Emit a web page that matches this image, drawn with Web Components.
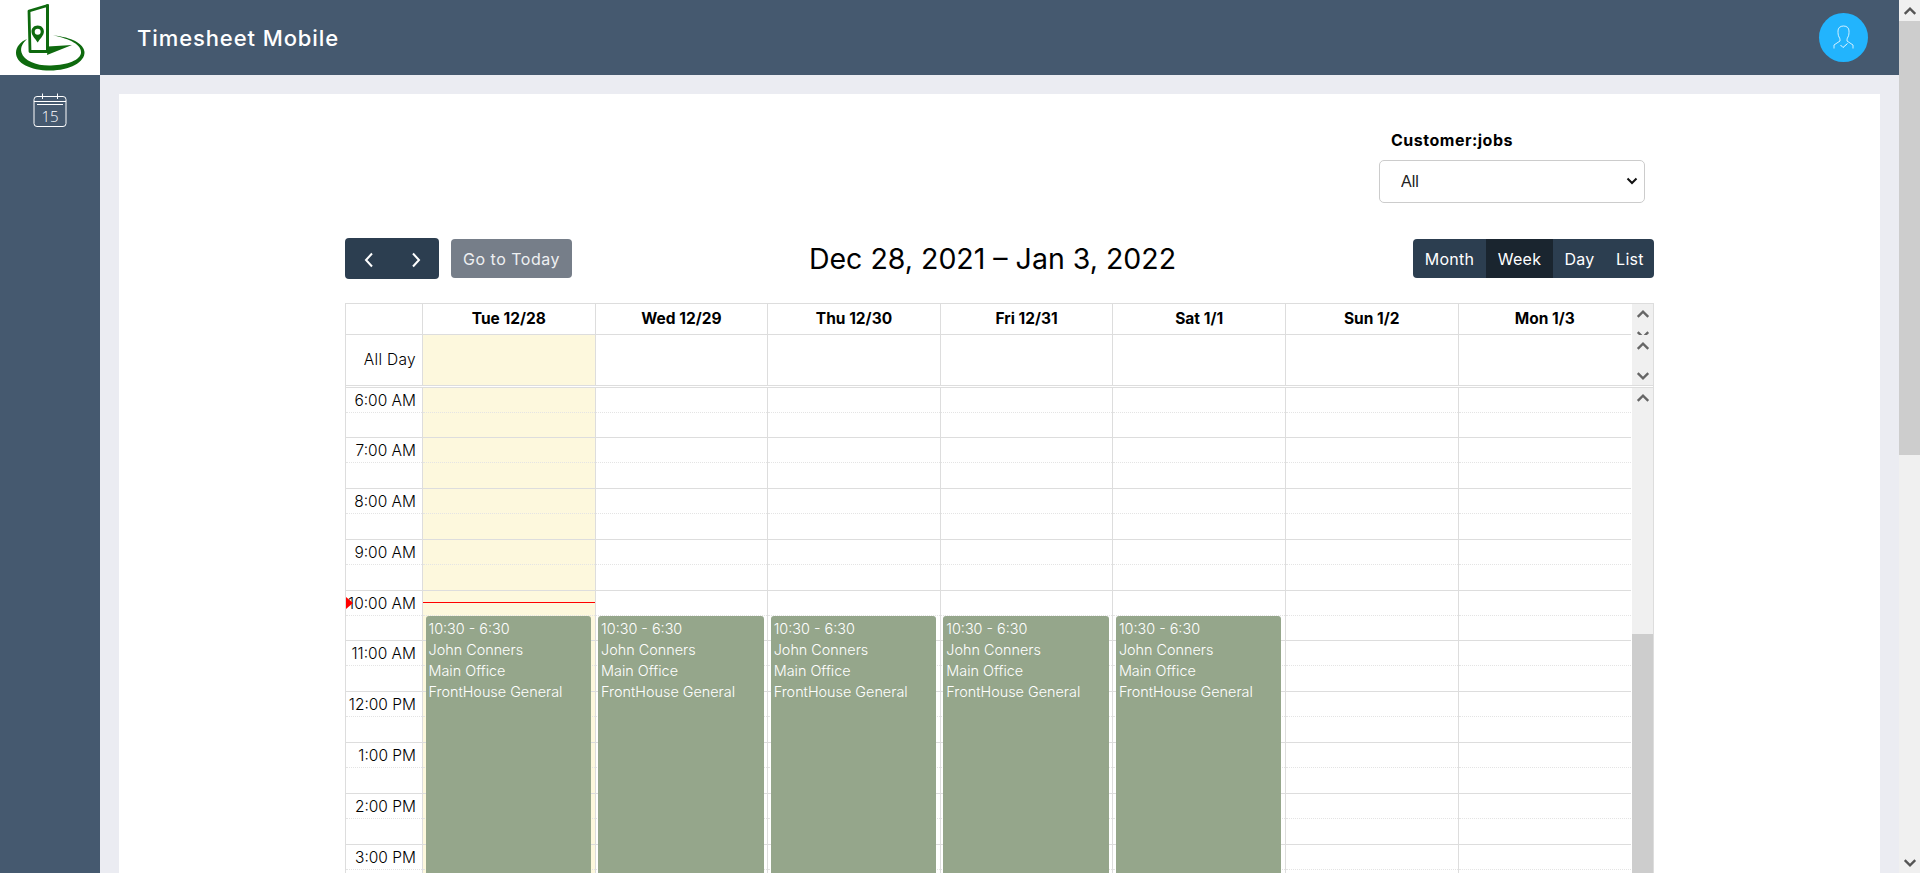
<!DOCTYPE html>
<html>
<head>
<meta charset="utf-8">
<title>Timesheet Mobile</title>
<style>
    html, body { margin: 0; height: 873px; overflow: hidden; background: #ebecf2; }
    body { font-family: Inter, "Open Sans", sans-serif; }
</style>
</head>
<body>
<ts-shell>
    <ts-sidebar slot="side"></ts-sidebar>
    <ts-header slot="top" title-text="Timesheet Mobile"></ts-header>
    <ts-card>
        <ts-filter label="Customer:jobs"></ts-filter>
        <ts-toolbar range="Dec 28, 2021 – Jan 3, 2022"></ts-toolbar>
        <ts-calendar></ts-calendar>
    </ts-card>
    <ts-page-scroll slot="scroll"></ts-page-scroll>
</ts-shell>

<script>
const chevUp = (color, w) => `<svg width="${w}" height="${w}" viewBox="0 0 12 12"><path d="M1.5 8.5 6 4l4.5 4.5" fill="none" stroke="${color}" stroke-width="2"/></svg>`;
const chevDown = (color, w) => `<svg width="${w}" height="${w}" viewBox="0 0 12 12"><path d="M1.5 3.5 6 8l4.5-4.5" fill="none" stroke="${color}" stroke-width="2"/></svg>`;

class TsShell extends HTMLElement {
    constructor() {
        super();
        this.attachShadow({ mode: 'open' });
    }
    connectedCallback() {
        this.shadowRoot.innerHTML = `
            <style>
                :host { display: flex; width: 1920px; height: 873px; overflow: hidden; }
                .main { flex: 1; min-width: 0; display: flex; flex-direction: column; overflow: hidden; }
                .content { flex: 1; min-height: 0; padding: 19px 19px 0; overflow: hidden; background: #ebecf2; }
            </style>
            <slot name="side"></slot>
            <div class="main">
                <slot name="top"></slot>
                <div class="content"><slot></slot></div>
            </div>
            <slot name="scroll"></slot>
        `;
    }
}

class TsSidebar extends HTMLElement {
    constructor() {
        super();
        this.attachShadow({ mode: 'open' });
    }
    connectedCallback() {
        this.shadowRoot.innerHTML = `
            <style>
                :host { display: flex; flex-direction: column; width: 100px; height: 873px; background: #45596f; flex: none; }
                .logo { height: 75px; background: #fff; }
                .logo svg, .cal svg { display: block; }
                .cal { padding: 17px 0 0 32px; }
                text { font-family: "Open Sans", sans-serif; font-size: 15px; fill: #fff; font-weight: 300; }
            </style>
            <div class="logo">
                <svg width="100" height="75" viewBox="0 0 100 75">
                    <path d="M29 11 47.500 5.500V51.500H30Z" fill="#fff" stroke="#0e6a0e" stroke-width="2.800" stroke-linejoin="round"/>
                    <path d="M46 4.500h3V50h-3z" fill="#0e6a0e"/>
                    <path d="M48 46.500 72 45 47 55Z" fill="#0e6a0e"/>
                    <path d="M53 35.500C72 37 84 44 84.500 52 85 62 70 70.500 50 70.500 30 70.500 16 63 16 53 16 47 20 42 27 39 23 43 20 47 21.500 52.500 24 61 37 66 51 65.500 68 65 80 60 81 53 82 45 70 38.500 53 35.500Z" fill="#0e6a0e"/>
                    <path d="M37.700 25.500c-4 0-6.200 3-6.200 6 0 4 4 7.500 6.200 11 2.200-3.500 6.200-7 6.200-11 0-3-2.200-6-6.200-6Z" fill="#0e6a0e"/>
                    <circle cx="37.700" cy="31.700" r="3" fill="#fff"/>
                </svg>
            </div>
            <div class="cal">
                <svg width="36" height="36" viewBox="0 0 36 36" fill="none" stroke="#fff" stroke-width="1">
                    <rect x="2" y="4.500" width="32" height="30" rx="3"/>
                    <path d="M2 9.500H34M5 12.500H31M10.500 1.500V7M25.500 1.500V7"/>
                    <text x="18" y="30" text-anchor="middle" stroke="none">15</text>
                </svg>
            </div>
        `;
    }
}

class TsHeader extends HTMLElement {
    constructor() {
        super();
        this.attachShadow({ mode: 'open' });
    }
    connectedCallback() {
        this.shadowRoot.innerHTML = `
            <style>
                :host { display: flex; align-items: center; justify-content: space-between; height: 75px; background: #45596f; color: #fff; padding: 0 31px 0 37px; flex: none; }
                h1 { margin: 0; font-size: 22px; font-weight: 500; letter-spacing: .9px; }
                .avatar { width: 49px; height: 49px; border-radius: 50%; background: #22b4fd; }
                svg { display: block; }
            </style>
            <h1>${this.getAttribute('title-text')}</h1>
            <div class="avatar">
                <svg width="49" height="49" viewBox="0 3.500 49 49" fill="none" stroke="#fff" stroke-width=".8">
                    <path d="M21 31.500c0-2 0-2.500-1-4-1-2-1-4-1-6 0-3 2-5 5.500-5s5.500 2 5.500 5c0 2 0 4-1 6-1 1.500-1 2-1 4l6 4v3.500M21 31.500l-6 4v3.500"/>
                    <path d="M21.500 35.500l2.500 2.500 4.500-4" stroke-width=".9"/>
                </svg>
            </div>
        `;
    }
}

class TsCard extends HTMLElement {
    constructor() {
        super();
        this.attachShadow({ mode: 'open' });
    }
    connectedCallback() {
        this.shadowRoot.innerHTML = `
            <style>
                :host { display: block; background: #fff; padding: 34px 226px 0; height: 900px; }
            </style>
            <slot></slot>
        `;
    }
}

class TsFilter extends HTMLElement {
    constructor() {
        super();
        this.attachShadow({ mode: 'open' });
    }
    connectedCallback() {
        this.shadowRoot.innerHTML = `
            <style>
                :host { display: block; width: 266px; margin: 0 9px 35px auto; }
                label { display: block; font-size: 16px; font-weight: 700; line-height: 22px; color: #000; padding-left: 12px; margin-bottom: 10px; letter-spacing: .5px; position: relative; top: 1px; }
                .wrap { position: relative; }
                select { display: block; width: 266px; height: 43px; padding: 0 21px; background: #fff; border: 1px solid #ccc; border-radius: 5px; font: 16px "Liberation Sans", sans-serif; color: #222; appearance: none; }
                svg { position: absolute; right: 7px; top: 15px; pointer-events: none; }
            </style>
            <label>${this.getAttribute('label')}</label>
            <div class="wrap">
                <select><option>All</option></select>
                <svg width="12" height="12" viewBox="0 0 12 12"><path d="M1.500 3.500 6 8l4.500-4.500" fill="none" stroke="#111" stroke-width="2"/></svg>
            </div>
        `;
    }
}

class TsToolbar extends HTMLElement {
    constructor() {
        super();
        this.attachShadow({ mode: 'open' });
    }
    connectedCallback() {
        this.shadowRoot.innerHTML = `
            <style>
                :host { display: flex; align-items: center; justify-content: space-between; height: 41px; margin-bottom: 24px; }
                .left { display: flex; align-items: center; gap: 12px; }
                .pager { display: flex; height: 41px; background: #2c3e50; border-radius: 4px; }
                .pager span { width: 47px; display: flex; align-items: center; justify-content: center; padding-top: 3px; box-sizing: border-box; }
                .today { height: 39px; width: 121px; background: #767e89; color: #eef0f2; border-radius: 4px; font-size: 16px; letter-spacing: .5px; display: flex; align-items: center; justify-content: center; }
                h2 { margin: 0; font-size: 28.500px; font-weight: 400; color: #000; white-space: nowrap; }
                .views { display: flex; height: 39px; background: #2c3e50; color: #fff; border-radius: 4px; overflow: hidden; font-size: 16px; letter-spacing: .3px; }
                .views span { display: flex; align-items: center; justify-content: center; }
                .views .on { background: #1a252f; }
                svg { display: block; }
            </style>
            <div class="left">
                <div class="pager">
                    <span><svg width="12" height="16" viewBox="0 0 12 16"><path d="M9 1.500 3 8l6 6.500" fill="none" stroke="#fff" stroke-width="2"/></svg></span>
                    <span><svg width="12" height="16" viewBox="0 0 12 16"><path d="M3 1.500 9 8l-6 6.500" fill="none" stroke="#fff" stroke-width="2"/></svg></span>
                </div>
                <div class="today">Go to Today</div>
            </div>
            <h2>${this.getAttribute('range')}</h2>
            <div class="views">
                <span style="width:73px">Month</span>
                <span class="on" style="width:67px">Week</span>
                <span style="width:53px">Day</span>
                <span style="width:48px">List</span>
            </div>
        `;
    }
}

class TsEvent extends HTMLElement {
    constructor() {
        super();
        this.attachShadow({ mode: 'open' });
    }
    connectedCallback() {
        this.shadowRoot.innerHTML = `
            <style>
                :host { position: absolute; left: 2.500px; right: 3.500px; top: 228px; height: 408px; background: #95a68b; border-radius: 3px; color: #fff; font-size: 14.400px; font-weight: 300; line-height: 21px; padding: 2px 3px 0; box-sizing: border-box; z-index: 2; }
                div { white-space: nowrap; }
            </style>
            <div>10:30 - 6:30</div>
            <div>John Conners</div>
            <div>Main Office</div>
            <div>FrontHouse General</div>
        `;
    }
}

class TsCalendar extends HTMLElement {
    constructor() {
        super();
        this.attachShadow({ mode: 'open' });
    }
    connectedCallback() {
        const days = ['Tue 12/28', 'Wed 12/29', 'Thu 12/30', 'Fri 12/31', 'Sat 1/1', 'Sun 1/2', 'Mon 1/3'];
        const hours = ['6:00 AM', '7:00 AM', '8:00 AM', '9:00 AM', '10:00 AM', '11:00 AM', '12:00 PM', '1:00 PM', '2:00 PM', '3:00 PM'];
        const slots = hours.map(() => '<div class="slot"><i></i></div>').join('');
        this.shadowRoot.innerHTML = `
            <style>
                :host { display: block; width: 1309px; box-sizing: border-box; border-left: 1px solid #ddd; border-right: 1px solid #ddd; color: #000; }
                .row { display: grid; grid-template-columns: 76px repeat(6, 172.600px) 1fr 22px; }
                .cell { border-left: 1px solid #ddd; box-sizing: border-box; }
                .cell:first-child { border-left: 0; }
                .head { height: 32px; border-top: 1px solid #ddd; box-sizing: border-box; }
                .head .cell { border-bottom: 1px solid #ddd; font-size: 15.500px; font-weight: 700; line-height: 30px; text-align: center; }
                .allday { height: 50px; }
                .allday .label { font-size: 15.500px; font-weight: 300; letter-spacing: .3px; line-height: 50px; text-align: right; padding-right: 6px; }
                .today { background: #fdf8dd; }
                .sep { background: #fff; border-top: 1px solid #ddd; border-bottom: 1px solid #ddd; height: 1px; }
                .slot { height: 50.850px; box-sizing: border-box; border-bottom: 1px solid #ddd; position: relative; }
                .slot:first-child { height: 50px; }
                .slot i { position: absolute; left: 0; right: 0; top: 24px; border-top: 1px dotted #e4e4e4; }
                .axis .slot { font-size: 15.500px; font-weight: 300; text-align: right; padding-right: 6px; line-height: 25px; white-space: nowrap; }
                .day { position: relative; }
                .now { position: absolute; left: 0; right: 0; top: 214px; border-top: 1.500px solid #f00; z-index: 1; }
                .arrow { position: absolute; left: 0; top: 209px; width: 0; height: 0; border-left: 7px solid #f00; border-top: 6px solid transparent; border-bottom: 6px solid transparent; z-index: 1; }
                .axis { position: relative; }
                .bar { background: #f0f0f0; border-left: 1px solid #fff; display: flex; flex-direction: column; align-items: center; }
                .bar svg { display: block; flex: none; }
                .bar .thumb { background: #cdcdcd; align-self: stretch; height: 300px; margin-top: 229px; }
                .head .bar { padding-top: 3px; box-sizing: border-box; height: 31px; overflow: hidden; }
                .head .bar svg + svg { margin-top: 7px; }
                .allday .bar { padding-top: 4px; height: 50px; box-sizing: border-box; }
                .allday .bar svg + svg { margin-top: 16px; }
                .body .bar { padding-top: 3px; }
            </style>
            <div class="row head">
                <div class="cell"></div>
                ${days.map(d => `<div class="cell">${d}</div>`).join('')}
                <div class="bar">${chevUp('#666', 14)}${chevDown('#666', 14)}</div>
            </div>
            <div class="row allday">
                <div class="cell label">All Day</div>
                ${days.map((d, i) => `<div class="cell ${i === 0 ? 'today' : ''}"></div>`).join('')}
                <div class="bar">${chevUp('#666', 14)}${chevDown('#666', 14)}</div>
            </div>
            <div class="sep"></div>
            <div class="row body">
                <div class="axis">
                    ${hours.map(h => `<div class="slot">${h}<i></i></div>`).join('')}
                    <span class="arrow"></span>
                </div>
                ${days.map((d, i) => `<div class="cell day ${i === 0 ? 'today' : ''}">${slots}${i === 0 ? '<span class="now"></span>' : ''}${i < 5 ? '<ts-event></ts-event>' : ''}</div>`).join('')}
                <div class="bar">${chevUp('#666', 14)}<div class="thumb"></div></div>
            </div>
        `;
    }
}

class TsPageScroll extends HTMLElement {
    constructor() {
        super();
        this.attachShadow({ mode: 'open' });
    }
    connectedCallback() {
        this.shadowRoot.innerHTML = `
            <style>
                :host { display: flex; flex-direction: column; width: 21px; height: 873px; background: #f0f0f0; flex: none; }
                .btn { height: 21px; display: flex; align-items: center; justify-content: center; flex: none; }
                .thumb { height: 434px; background: #cdcdcd; flex: none; }
                .rest { flex: 1; }
                svg { display: block; }
            </style>
            <div class="btn">${chevUp('#555', 14)}</div>
            <div class="thumb"></div>
            <div class="rest"></div>
            <div class="btn">${chevDown('#555', 14)}</div>
        `;
    }
}

customElements.define('ts-shell', TsShell);
customElements.define('ts-sidebar', TsSidebar);
customElements.define('ts-header', TsHeader);
customElements.define('ts-card', TsCard);
customElements.define('ts-filter', TsFilter);
customElements.define('ts-toolbar', TsToolbar);
customElements.define('ts-event', TsEvent);
customElements.define('ts-calendar', TsCalendar);
customElements.define('ts-page-scroll', TsPageScroll);
</script>
</body>
</html>
